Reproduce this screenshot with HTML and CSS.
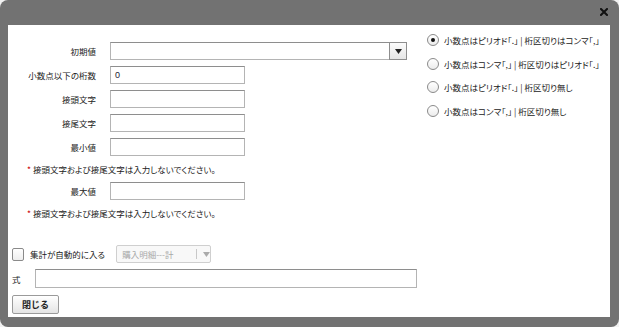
FILE: index.html
```html
<!DOCTYPE html>
<html lang="ja">
<head>
<meta charset="utf-8">
<link rel="stylesheet" href="styles.css">
</head>
<body>
<div class="dialog">
  <div class="titlebar">
    <svg class="close" width="8" height="8" viewBox="0 0 8 8"><path d="M1 1L7 7M7 1L1 7" stroke="#111" stroke-width="2" stroke-linecap="square"/></svg>
  </div>
  <div class="content">
    <div class="top">
      <div class="form">
        <div class="row"><span class="lbl">初期値</span><span class="combo"><span class="field combo-field"></span><span class="combo-btn"><svg width="7" height="5" viewBox="0 0 7 5"><path d="M0 0H7L3.5 5Z" fill="#222"/></svg></span></span></div>
        <div class="row"><span class="lbl">小数点以下の桁数</span><span class="field">0</span></div>
        <div class="row"><span class="lbl">接頭文字</span><span class="field"></span></div>
        <div class="row"><span class="lbl">接尾文字</span><span class="field"></span></div>
        <div class="row"><span class="lbl">最小値</span><span class="field"></span></div>
        <div class="note"><span class="ast">*</span> 接頭文字および接尾文字は入力しないでください。</div>
        <div class="row"><span class="lbl">最大値</span><span class="field"></span></div>
        <div class="note"><span class="ast">*</span> 接頭文字および接尾文字は入力しないでください。</div>
      </div>
      <div class="radios">
        <div class="radio-row"><span class="radio checked"></span><span>小数点はピリオド「.」 | 桁区切りはコンマ「,」</span></div>
        <div class="radio-row"><span class="radio"></span><span>小数点はコンマ「,」 | 桁区切りはピリオド「.」</span></div>
        <div class="radio-row"><span class="radio"></span><span>小数点はピリオド「.」 | 桁区切り無し</span></div>
        <div class="radio-row"><span class="radio"></span><span>小数点はコンマ「,」 | 桁区切り無し</span></div>
      </div>
    </div>
    <div class="auto-row">
      <span class="checkbox"></span>
      <span class="auto-lbl">集計が自動的に入る</span>
      <span class="dd-disabled"><span class="dd-text">購入明細---計</span><span class="dd-sep"></span><svg width="7" height="5" viewBox="0 0 7 5"><path d="M0 0H7L3.5 5Z" fill="#aaa"/></svg></span>
    </div>
    <div class="formula-row">
      <span class="f-lbl">式</span>
      <span class="field formula"></span>
    </div>
    <div class="footer">
      <button class="btn">閉じる</button>
    </div>
  </div>
</div>
</body>
</html>
```

FILE: styles.css
```css
* { box-sizing: border-box; }
html, body { margin: 0; padding: 0; background: #f2f2f2; }
body {
  font-family: "Noto Sans CJK JP", "Noto Sans", sans-serif;
  font-size: 8.5px;
  font-feature-settings: "palt";
  color: #222;
}
.dialog {
  width: 619px;
  height: 327px;
  background: #727272;
  border-radius: 8px;
  padding: 0 9px 10px 8px;
  display: flex;
  flex-direction: column;
}
.titlebar {
  height: 25px;
  display: flex;
  justify-content: flex-end;
  align-items: flex-start;
  padding: 8px 2px 0 0;
}
.close { display: block; }
.content {
  flex: 1;
  background: #fff;
  display: flex;
  flex-direction: column;
  padding-bottom: 3px;
}
.top { display: flex; }
.form {
  width: 419px;
  padding-top: 17px;
  display: flex;
  flex-direction: column;
  gap: 6px;
}
.row {
  display: flex;
  align-items: center;
  height: 18px;
}
.lbl {
  width: 88px;
  text-align: right;
  margin-right: 14px;
  flex: none;
}
.field {
  display: flex;
  align-items: center;
  width: 135px;
  height: 18px;
  border: 1px solid #b4b4b4;
  border-top-color: #8e8e8e;
  background: #fff;
  padding-left: 4px;
  font-family: "Liberation Sans", sans-serif;
  font-size: 9px;
  color: #223;
}
.combo { display: flex; }
.combo-field { width: 279px; border-right: none; }
.combo-btn {
  width: 18px;
  height: 18px;
  border: 1px solid #8e8e8e;
  background: linear-gradient(#fbfbfb, #e6e6e6);
  display: flex;
  align-items: center;
  justify-content: center;
}
.combo-btn svg, .dd-disabled svg { display: block; }
.note {
  height: 14px;
  line-height: 14px;
  padding-left: 19px;
}
.ast { color: #c00; }
.radios {
  padding-top: 3px;
  display: flex;
  flex-direction: column;
}
.radio-row {
  height: 23.7px;
  display: flex;
  align-items: center;
  gap: 5px;
}
.radio {
  width: 12px;
  height: 12px;
  border-radius: 50%;
  border: 1px solid #8a8a8a;
  background: linear-gradient(#ffffff, #ececec);
  display: flex;
  align-items: center;
  justify-content: center;
}
.radio.checked::after {
  content: "";
  width: 4px;
  height: 4px;
  border-radius: 50%;
  background: #111;
}
.auto-row {
  margin-top: 25px;
  height: 18px;
  display: flex;
  align-items: center;
  padding-left: 4px;
}
.checkbox {
  width: 12px;
  height: 13px;
  border: 1px solid #8a8a8a;
  border-radius: 2px;
  background: linear-gradient(#fff, #eee);
}
.auto-lbl { margin-left: 6px; }
.dd-disabled {
  margin-left: 11px;
  width: 95px;
  height: 18px;
  border: 1px solid #cfcfcf;
  border-radius: 2px;
  background: #f8f8f8;
  display: flex;
  align-items: center;
  padding-left: 5px;
  color: #a8a8a8;
}
.dd-text { width: 75px; }
.dd-sep {
  width: 1px;
  height: 10px;
  background: #c8c8c8;
  margin-right: 6px;
}
.formula-row {
  margin-top: 6px;
  height: 19px;
  display: flex;
  align-items: center;
  padding-left: 4px;
}
.f-lbl { width: 23px; }
.formula { width: 382px; height: 19px; }
.footer {
  margin-top: 7px;
  padding-left: 4px;
  display: flex;
}
.btn {
  width: 47px;
  height: 19px;
  padding: 0;
  border: 1px solid #9a9a9a;
  border-radius: 2px;
  background: linear-gradient(#ffffff, #e4e4e4);
  font-family: "Noto Sans CJK JP", sans-serif;
  font-size: 9px;
  font-weight: bold;
  color: #222;
}
```
